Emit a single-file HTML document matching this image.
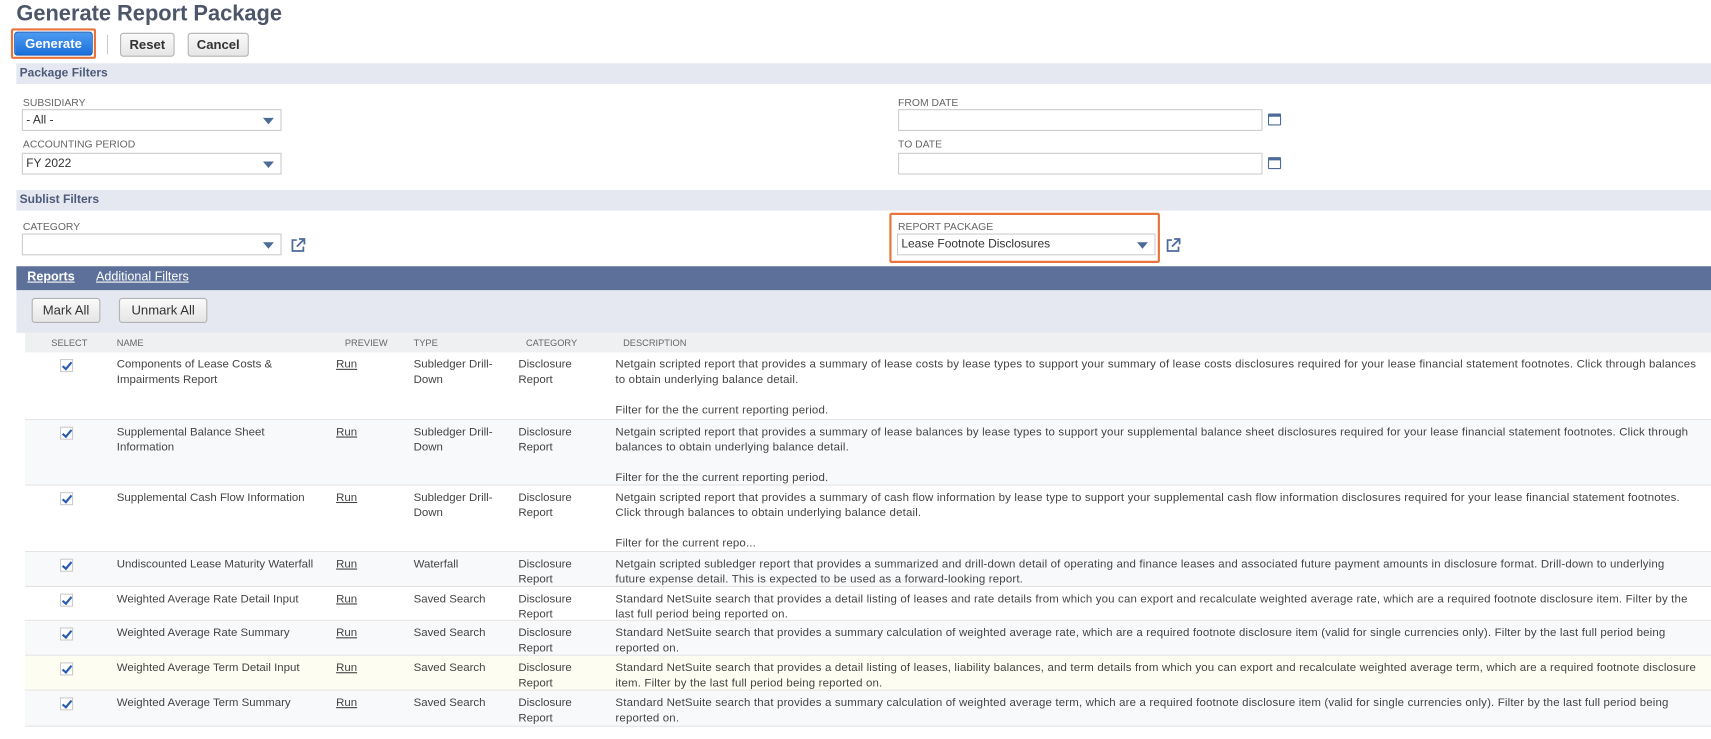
<!DOCTYPE html>
<html><head><meta charset="utf-8"><style>
*{box-sizing:border-box;margin:0;padding:0}
body{width:1711px;height:738px;background:#fff;font-family:"Liberation Sans",sans-serif;color:#333;position:relative;overflow:hidden;font-size:11px}
#w{position:absolute;left:0;top:0;width:1568px;height:677px;transform:scale(1.0912);transform-origin:0 0}
.a{position:absolute}
h1{position:absolute;left:15px;top:2px;font-size:20px;font-weight:bold;color:#4d5669}
.btn{position:absolute;height:22px;border:1px solid #b2b2b2;border-radius:3px;background:linear-gradient(#fafafa,#e5e5e5);font-size:12px;font-weight:bold;color:#333;text-align:center;line-height:20px}
.bar{position:absolute;left:15px;width:1553px;height:19px;background:#e5e8f0;color:#4d5a78;font-weight:bold;font-size:11px;line-height:19px;padding-left:3px}
.lbl{position:absolute;font-size:9.5px;color:#666}
.sel{position:absolute;height:20px;border:1px solid #ccc;background:#fff;font-size:11px;line-height:18px;padding-left:3px;color:#333}
.sel .ar{position:absolute;right:6px;top:7px;width:0;height:0;border-left:5px solid transparent;border-right:5px solid transparent;border-top:6px solid #4d6b99}
.cal{position:absolute;width:12px;height:11px;border:1.5px solid #4d6b99;border-top-width:3px;border-radius:1px}
.ext{position:absolute;width:14px;height:14px}
.row{position:absolute;left:23px;width:1545px;border-bottom:1px solid #e3e3e3;overflow:hidden}
.row div{position:absolute;top:4px;line-height:14px;font-size:10.5px;color:#444;white-space:nowrap}
.row div.d{letter-spacing:0.15px}
.cb{left:32px;width:12px;height:12px;border:1px solid #ccc;background:#fff;top:6px!important}
.cb:after{content:"";position:absolute;left:3px;top:0px;width:3px;height:7px;border:solid #2a5db0;border-width:0 2px 2px 0;transform:rotate(40deg)}
.hd{position:absolute;top:309px;font-size:8.5px;color:#666}
</style></head><body><div id="w">
<h1>Generate Report Package</h1>
<div class="a" style="left:10px;top:26px;width:78px;height:28px;border:2px solid #e8743b;border-radius:2px"></div>
<div class="btn" style="left:13px;top:29px;width:72px;background:linear-gradient(#4d9cf2,#1a6fdb);border-color:#1a5fc0;color:#fff">Generate</div>
<div class="a" style="left:98px;top:32px;width:1px;height:18px;background:#ccc"></div>
<div class="btn" style="left:110px;top:30px;width:50px">Reset</div>
<div class="btn" style="left:172px;top:30px;width:56px">Cancel</div>

<div class="bar" style="top:58px">Package Filters</div>
<div class="lbl" style="left:21px;top:89px">SUBSIDIARY</div>
<div class="sel" style="left:20px;top:100px;width:238px">- All -<span class="ar"></span></div>
<div class="lbl" style="left:21px;top:127px">ACCOUNTING PERIOD</div>
<div class="sel" style="left:20px;top:140px;width:238px">FY 2022<span class="ar"></span></div>
<div class="lbl" style="left:823px;top:89px">FROM DATE</div>
<div class="sel" style="left:823px;top:100px;width:334px"></div>
<div class="cal" style="left:1162px;top:104px"></div>
<div class="lbl" style="left:823px;top:127px">TO DATE</div>
<div class="sel" style="left:823px;top:140px;width:334px"></div>
<div class="cal" style="left:1162px;top:144px"></div>

<div class="bar" style="top:174px">Sublist Filters</div>
<div class="lbl" style="left:21px;top:203px">CATEGORY</div>
<div class="sel" style="left:20px;top:214px;width:238px"><span class="ar"></span></div>
<svg class="ext" style="left:266px;top:218px" viewBox="0 0 14 14"><path d="M6 2H2v10h10V8M8 1h5v5M13 1L6 8" fill="none" stroke="#4d6b99" stroke-width="1.6"/></svg>
<div class="a" style="left:815px;top:195px;width:248px;height:46px;border:2px solid #e8743b;border-radius:2px"></div>
<div class="lbl" style="left:823px;top:203px">REPORT PACKAGE</div>
<div class="sel" style="left:822px;top:214px;width:237px">Lease Footnote Disclosures<span class="ar"></span></div>
<svg class="ext" style="left:1068px;top:218px" viewBox="0 0 14 14"><path d="M6 2H2v10h10V8M8 1h5v5M13 1L6 8" fill="none" stroke="#4d6b99" stroke-width="1.6"/></svg>

<div class="a" style="left:15px;top:244px;width:1553px;height:22px;background:#5c7099"></div>
<div class="a" style="left:25px;top:248px;color:#fff;font-weight:bold;font-size:11.5px;text-decoration:underline">Reports</div>
<div class="a" style="left:88px;top:248px;color:#fff;font-size:11.5px;text-decoration:underline">Additional Filters</div>
<div class="a" style="left:15px;top:266px;width:1553px;height:39px;background:#e5e8f0"></div>
<div class="btn" style="left:29px;top:273px;width:63px;font-weight:normal;font-size:12px;height:23px">Mark All</div>
<div class="btn" style="left:109px;top:273px;width:81px;font-weight:normal;font-size:12px;height:23px">Unmark All</div>
<div class="a" style="left:23px;top:305px;width:1545px;height:18px;background:#eff0f2"></div>
<div class="hd" style="left:47px">SELECT</div><div class="hd" style="left:107px">NAME</div><div class="hd" style="left:316px">PREVIEW</div><div class="hd" style="left:379px">TYPE</div><div class="hd" style="left:482px">CATEGORY</div><div class="hd" style="left:571px">DESCRIPTION</div>

<div class="row" style="top:323px;height:62px;background:#fff"><div class="cb"></div><div style="left:84px">Components of Lease Costs &amp;<br>Impairments Report</div><div style="left:285px;text-decoration:underline">Run</div><div style="left:356px">Subledger Drill-<br>Down</div><div style="left:452px">Disclosure<br>Report</div><div class="d" style="left:541px">Netgain scripted report that provides a summary of lease costs by lease types to support your summary of lease costs disclosures required for your lease financial statement footnotes. Click through balances<br>to obtain underlying balance detail.<br><br>Filter for the the current reporting period.</div></div>
<div class="row" style="top:385px;height:60px;background:#f8f9fb"><div class="cb"></div><div style="left:84px">Supplemental Balance Sheet<br>Information</div><div style="left:285px;text-decoration:underline">Run</div><div style="left:356px">Subledger Drill-<br>Down</div><div style="left:452px">Disclosure<br>Report</div><div class="d" style="left:541px">Netgain scripted report that provides a summary of lease balances by lease types to support your supplemental balance sheet disclosures required for your lease financial statement footnotes. Click through<br>balances to obtain underlying balance detail.<br><br>Filter for the the current reporting period.</div></div>
<div class="row" style="top:445px;height:61px;background:#fff"><div class="cb"></div><div style="left:84px">Supplemental Cash Flow Information</div><div style="left:285px;text-decoration:underline">Run</div><div style="left:356px">Subledger Drill-<br>Down</div><div style="left:452px">Disclosure<br>Report</div><div class="d" style="left:541px">Netgain scripted report that provides a summary of cash flow information by lease type to support your supplemental cash flow information disclosures required for your lease financial statement footnotes.<br>Click through balances to obtain underlying balance detail.<br><br>Filter for the current repo...</div></div>
<div class="row" style="top:506px;height:32px;background:#f8f9fb"><div class="cb"></div><div style="left:84px">Undiscounted Lease Maturity Waterfall</div><div style="left:285px;text-decoration:underline">Run</div><div style="left:356px">Waterfall</div><div style="left:452px">Disclosure<br>Report</div><div class="d" style="left:541px">Netgain scripted subledger report that provides a summarized and drill-down detail of operating and finance leases and associated future payment amounts in disclosure format. Drill-down to underlying<br>future expense detail. This is expected to be used as a forward-looking report.</div></div>
<div class="row" style="top:538px;height:31px;background:#fff"><div class="cb"></div><div style="left:84px">Weighted Average Rate Detail Input</div><div style="left:285px;text-decoration:underline">Run</div><div style="left:356px">Saved Search</div><div style="left:452px">Disclosure<br>Report</div><div class="d" style="left:541px">Standard NetSuite search that provides a detail listing of leases and rate details from which you can export and recalculate weighted average rate, which are a required footnote disclosure item. Filter by the<br>last full period being reported on.</div></div>
<div class="row" style="top:569px;height:32px;background:#f8f9fb"><div class="cb"></div><div style="left:84px">Weighted Average Rate Summary</div><div style="left:285px;text-decoration:underline">Run</div><div style="left:356px">Saved Search</div><div style="left:452px">Disclosure<br>Report</div><div class="d" style="left:541px">Standard NetSuite search that provides a summary calculation of weighted average rate, which are a required footnote disclosure item (valid for single currencies only). Filter by the last full period being<br>reported on.</div></div>
<div class="row" style="top:601px;height:32px;background:#fdfdf2"><div class="cb"></div><div style="left:84px">Weighted Average Term Detail Input</div><div style="left:285px;text-decoration:underline">Run</div><div style="left:356px">Saved Search</div><div style="left:452px">Disclosure<br>Report</div><div class="d" style="left:541px">Standard NetSuite search that provides a detail listing of leases, liability balances, and term details from which you can export and recalculate weighted average term, which are a required footnote disclosure<br>item. Filter by the last full period being reported on.</div></div>
<div class="row" style="top:633px;height:33px;background:#f8f9fb"><div class="cb"></div><div style="left:84px">Weighted Average Term Summary</div><div style="left:285px;text-decoration:underline">Run</div><div style="left:356px">Saved Search</div><div style="left:452px">Disclosure<br>Report</div><div class="d" style="left:541px">Standard NetSuite search that provides a summary calculation of weighted average term, which are a required footnote disclosure item (valid for single currencies only). Filter by the last full period being<br>reported on.</div></div>
</div></body></html>
